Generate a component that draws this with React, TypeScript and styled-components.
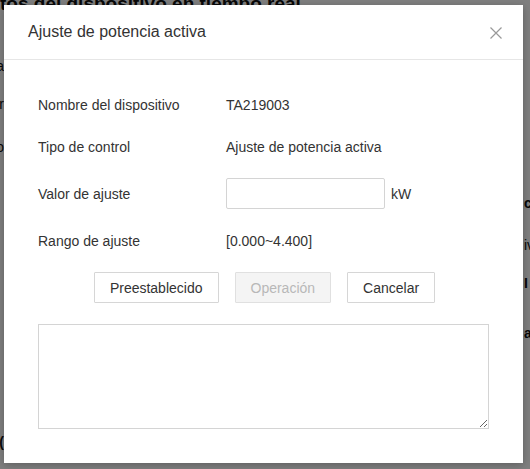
import styled, { createGlobalStyle } from "styled-components"

const GlobalStyle = createGlobalStyle`
   html, body {
      margin: 0;
      padding: 0;
   }
   body {
      font-family: "Liberation Sans", Arial, sans-serif;
      color: #333;
   }
`

const Page = styled.div`
   position: relative;
   width: 530px;
   height: 469px;
   overflow: hidden;
   background: #fff;
`

const PageHeading = styled.h1`
   margin: -8px 0 0 0;
   font-size: 19px;
   line-height: 23px;
   font-weight: bold;
   color: #111;
   white-space: nowrap;
`

const PageColumns = styled.div`
   display: flex;
   justify-content: space-between;
`

const EdgeColumn = styled.div<{ $side: "left" | "right" }>`
   width: ${p => (p.$side === "left" ? "4px" : "6px")};
   overflow: hidden;
   display: flex;
   flex-direction: column;
   align-items: ${p => (p.$side === "left" ? "flex-end" : "flex-start")};
   font-size: 14px;
   line-height: 16px;
   color: #111;
   white-space: nowrap;
`

const EdgeText = styled.span<{ $top: number; $bold?: boolean }>`
   margin-top: ${p => p.$top}px;
   font-weight: ${p => (p.$bold ? "bold" : "normal")};
`

const Overlay = styled.div`
   position: absolute;
   inset: 0;
   background: rgba(0, 0, 0, 0.5);
   padding: 5px 0 0 4px;
`

const Dialog = styled.section`
   width: 519px;
   height: 458px;
   background: #fff;
   box-shadow: 0 2px 8px rgba(0, 0, 0, 0.25);
   display: flex;
   flex-direction: column;
`

const DialogHeader = styled.header`
   height: 54px;
   flex-shrink: 0;
   display: flex;
   align-items: center;
   justify-content: space-between;
   padding: 0 21px 0 24px;
   border-bottom: 1px solid #e6e6e6;
`

const DialogTitle = styled.h2`
   margin: 0;
   font-size: 16px;
   font-weight: normal;
   color: #333;
`

const CloseButton = styled.button`
   width: 12px;
   height: 12px;
   padding: 0;
   border: 0;
   background: none;
   cursor: pointer;
   display: flex;
   margin-top: 1px;
`

const DialogBody = styled.div`
   padding: 29px 34px 34px;
   display: flex;
   flex-direction: column;
`

const FieldRow = styled.div<{ $height: number; $gap: number }>`
   display: grid;
   grid-template-columns: 188px 1fr;
   align-items: center;
   height: ${p => p.$height}px;
   margin-top: ${p => p.$gap}px;
   font-size: 14px;
   color: #333;
`

const FieldValue = styled.div`
   display: flex;
   align-items: center;
   gap: 6px;
`

const ValueInput = styled.input`
   width: 159px;
   height: 31px;
   box-sizing: border-box;
   border: 1px solid #d4d4d4;
   border-radius: 2px;
   padding: 0 8px;
   font-family: inherit;
   font-size: 14px;
   outline: none;
`

const ButtonRow = styled.div`
   display: flex;
   justify-content: center;
   gap: 16px;
   margin: 15px 0 0 2px;
`

const ActionButton = styled.button`
   height: 31px;
   padding: 0 15px;
   background: #fff;
   border: 1px solid #d6d6d6;
   border-radius: 1px;
   font-family: inherit;
   font-size: 14px;
   color: #333;
   cursor: pointer;

   &:disabled {
      background: #f4f4f4;
      border-color: #e0e0e0;
      color: #b8b8b8;
      cursor: default;
   }
`

const LogArea = styled.textarea`
   margin-top: 21px;
   width: 100%;
   height: 105px;
   box-sizing: border-box;
   border: 1px solid #d4d4d4;
   font-family: inherit;
   font-size: 14px;
   outline: none;
`

export default function App() {
   return (
      <Page>
         <GlobalStyle />
         <PageHeading>tos del dispositivo en tiempo real</PageHeading>
         <PageColumns>
            <EdgeColumn $side="left">
               <EdgeText $top={43}>Tensión de red a</EdgeText>
               <EdgeText $top={22}>Potencia activa por</EdgeText>
               <EdgeText $top={27}>Potencia reactiva to</EdgeText>
               <EdgeText $top={279} $bold>(</EdgeText>
            </EdgeColumn>
            <EdgeColumn $side="right">
               <EdgeText $top={180} $bold>co</EdgeText>
               <EdgeText $top={26}>iva</EdgeText>
               <EdgeText $top={22} $bold>I</EdgeText>
               <EdgeText $top={34} $bold>a</EdgeText>
            </EdgeColumn>
         </PageColumns>

         <Overlay>
            <Dialog>
               <DialogHeader>
                  <DialogTitle>Ajuste de potencia activa</DialogTitle>
                  <CloseButton aria-label="Cerrar">
                     <svg width="12" height="12" viewBox="0 0 12 12">
                        <path d="M0.5 0.5 L11.5 11.5 M11.5 0.5 L0.5 11.5" stroke="#999" strokeWidth="1.2" fill="none" />
                     </svg>
                  </CloseButton>
               </DialogHeader>

               <DialogBody>
                  <FieldRow $height={32} $gap={0}>
                     <span>Nombre del dispositivo</span>
                     <FieldValue>TA219003</FieldValue>
                  </FieldRow>
                  <FieldRow $height={32} $gap={10}>
                     <span>Tipo de control</span>
                     <FieldValue>Ajuste de potencia activa</FieldValue>
                  </FieldRow>
                  <FieldRow $height={31} $gap={15}>
                     <span>Valor de ajuste</span>
                     <FieldValue>
                        <ValueInput type="text" />
                        <span>kW</span>
                     </FieldValue>
                  </FieldRow>
                  <FieldRow $height={32} $gap={16}>
                     <span>Rango de ajuste</span>
                     <FieldValue>[0.000~4.400]</FieldValue>
                  </FieldRow>

                  <ButtonRow>
                     <ActionButton>Preestablecido</ActionButton>
                     <ActionButton disabled>Operación</ActionButton>
                     <ActionButton>Cancelar</ActionButton>
                  </ButtonRow>

                  <LogArea />
               </DialogBody>
            </Dialog>
         </Overlay>
      </Page>
   )
}
